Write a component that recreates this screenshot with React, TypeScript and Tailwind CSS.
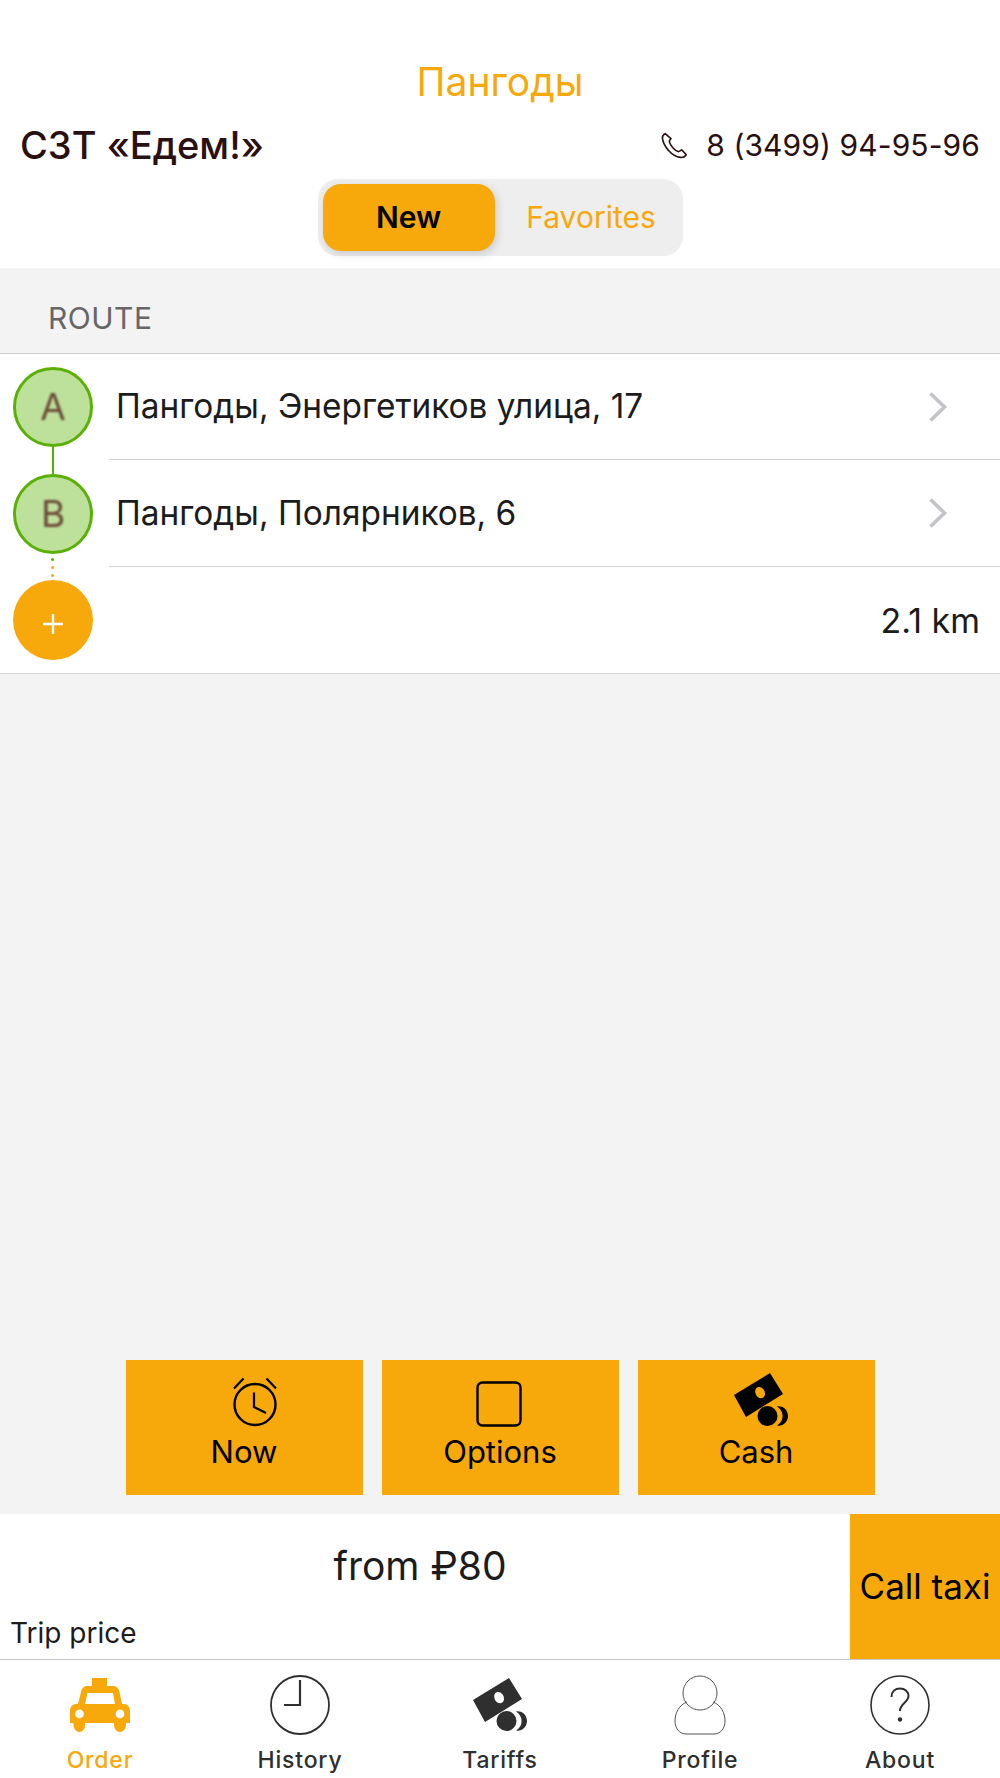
const ORANGE = "#f7a80a";

function Chevron() {
  return (
    <svg width="20" height="32" viewBox="0 0 20 32" fill="none" className="shrink-0">
      <path d="M2.5 2.5 L16.5 16 L2.5 29.5" stroke="#c4c4c8" strokeWidth="3.6" />
    </svg>
  );
}

function PhoneIcon() {
  return (
    <svg width="27" height="27" viewBox="0 0 27 27" fill="none" stroke="#2a1010" strokeWidth="1.6" strokeLinejoin="round">
      <path d="M4.2 1.6 C2.4 2.6 1.2 4 1.4 6.2 C2 10.5 4.4 15 7.6 18.6 C11 22.6 15.5 25 19.6 25.4 C22 25.6 24.4 24.2 25.2 22.6 L20.6 17.8 C19.6 18.8 18.4 19.6 17.2 19.6 C14.6 18.6 11.6 15.8 9.6 12.6 C8.4 10.6 8 9.2 8.8 8 C9.4 7.4 9.8 7 10 6.6 Z" />
    </svg>
  );
}

function Alarm() {
  return (
    <svg width="46" height="50" viewBox="0 0 46 50" fill="none" stroke="black" strokeWidth="2.4" className="block ml-[22px]">
      <circle cx="23" cy="27.5" r="20.5" />
      <path d="M2 11.5 L11.5 1.5 M44 11.5 L34.5 1.5" strokeWidth="2.2" />
      <path d="M22 15.5 V30 L34 36" strokeWidth="2.2" />
    </svg>
  );
}

function OptionsIcon() {
  return (
    <svg width="46" height="46" viewBox="0 0 46 46" fill="none" stroke="black" strokeWidth="2.4" className="block mr-[3px]">
      <rect x="1.5" y="1.5" width="43" height="43" rx="5" />
    </svg>
  );
}

function CashIcon({ color, className }: { color: string; className?: string }) {
  return (
    <svg width="56" height="54" viewBox="0 0 56 54" className={className}>
      <path
        fillRule="evenodd"
        fill={color}
        d="M37 0 L50 21 L13 44 L1 22 Z M25 14 C21.8 15 21.5 19 23.2 22.2 C25 25.2 28.5 26 30.6 24.2 C32.6 22.4 32.4 18.8 30.6 16.4 C29 14.4 27 13.6 25 14 Z"
      />
      <circle cx="34.5" cy="43" r="10" fill={color} />
      <path d="M44 33.4 C51 32.6 55 38 55 43 C55 48.4 50.6 53.4 44 52.6 C48 50 49.6 46.6 49.6 43 C49.6 39.4 48 36 44 33.4 Z" fill={color} />
    </svg>
  );
}

function Taxi() {
  return (
    <svg width="60" height="54" viewBox="0 0 60 54" className="block">
      <path
        fillRule="evenodd"
        fill={ORANGE}
        d="M22 0 H37 V8 H43 C47 8 48.5 10.5 49.5 14 L52 26 H54 C57.5 26 60 29 60 33 V45 H56 V47 C56 51 53 54 50 54 C47 54 44 51 44 47 V45 H15 V47 C15 51 12.5 54 9.5 54 C6.5 54 3.5 51 3.5 47 V45 H0 V33 C0 29 2.5 26 6 26 H8 L11 14 C12 10.5 13.5 8 17 8 H22 Z M17.5 15 L15 26 H45 L43 15 Z"
      />
      <circle cx="9.5" cy="36" r="4.4" fill="white" />
      <circle cx="50" cy="36" r="4.4" fill="white" />
    </svg>
  );
}

function HistoryIcon() {
  return (
    <svg width="60" height="60" viewBox="0 0 60 60" fill="none" stroke="#2f2f2f" className="block">
      <circle cx="30" cy="30" r="29" strokeWidth="1.8" />
      <path d="M30 5 V30 H14" strokeWidth="2.2" />
    </svg>
  );
}

function ProfileIcon() {
  return (
    <svg width="52" height="60" viewBox="0 0 52 60" fill="none" stroke="#555" strokeWidth="1" className="block">
      <circle cx="26" cy="18" r="17" />
      <path d="M13 27 C5 30 1 38 1 46 C1 54 6 59 12 59 H40 C46 59 51 54 51 46 C51 38 47 30 39 27" />
    </svg>
  );
}

function AboutIcon() {
  return (
    <svg width="60" height="60" viewBox="0 0 60 60" fill="none" stroke="#2f2f2f" className="block">
      <circle cx="30" cy="30" r="29" strokeWidth="1.6" />
      <path d="M21.5 22 C21.5 16.5 25 13.5 30 13.5 C35.2 13.5 38.5 16.8 38.5 21 C38.5 27.5 30 28 30 36" strokeWidth="2" />
      <circle cx="30" cy="44.5" r="2.2" fill="#2f2f2f" stroke="none" />
    </svg>
  );
}

function Point({ letter }: { letter: string }) {
  return (
    <div className="w-[80px] h-[80px] rounded-full bg-[#bde09b] border-[3px] border-[#5bb006] flex items-center justify-center">
      <span className="text-[37px] text-[#6a4a38] blur-[0.9px]">{letter}</span>
    </div>
  );
}

function ActionButton({ icon, label }: { icon: React.ReactNode; label: string }) {
  return (
    <div className="w-[237px] h-[135px] bg-[#f7a80a] flex flex-col items-center text-black text-[31px] leading-[34px]">
      <div className="h-[67px] flex items-end justify-center">{icon}</div>
      <div className="mt-[8px]">{label}</div>
    </div>
  );
}

function Tab({ icon, label, active }: { icon: React.ReactNode; label: string; active?: boolean }) {
  return (
    <div className={`flex flex-col items-center ${active ? "text-[#f7a80a]" : "text-[#2f2f2f]"}`}>
      <div className="h-[60px] flex items-center justify-center">{icon}</div>
      <div className="mt-[11px] text-[23px] leading-[28px] font-medium tracking-[0.8px]">{label}</div>
    </div>
  );
}

function RouteRow({ point, text, last, heightClass }: { point: React.ReactNode; text?: string; last?: boolean; heightClass: string }) {
  return (
    <div className={`flex items-center pl-[13px] ${heightClass}`}>
      <div className="w-[96px] shrink-0">{point}</div>
      <div className={`flex-1 h-full flex items-center pl-[7px] pr-[52px] ${last ? "" : "border-b border-[#cfcfcf]"}`}>
        {text ? (
          <>
            <span className="flex-1 text-[33.4px] text-[#1c1c1c]">{text}</span>
            <Chevron />
          </>
        ) : (
          <span className="ml-auto -mr-[32px] text-[34px] text-[#1c1c1c]">2.1 km</span>
        )}
      </div>
    </div>
  );
}

export default function App() {
  return (
    <div className="w-[1000px] h-[1778px] flex flex-col bg-white font-['Inter','Noto_Sans',sans-serif] overflow-hidden">
      <header className="h-[268px] shrink-0 flex flex-col">
        <div className="pt-[58px] text-center text-[39px] leading-[48px] text-[#f7a80a]">Пангоды</div>
        <div className="flex items-center justify-between pl-[20px] pr-[20px] mt-[21px] h-[36px] text-[#2a1010]">
          <span className="text-[38px] font-medium">СЗТ «Едем!»</span>
          <span className="flex items-center gap-[18px] text-[30px] tracking-[0.1px]">
            <PhoneIcon />8 (3499) 94-95-96
          </span>
        </div>
        <div className="self-center mt-[16px] w-[365px] h-[77px] bg-[#eeeeee] rounded-[20px] p-[5px] flex text-[30px]">
          <div className="w-[172px] h-[67px] bg-[#f7a80a] rounded-[18px] shadow-[2px_3px_8px_rgba(0,0,0,0.15)] flex items-center justify-center font-semibold text-black">
            New
          </div>
          <div className="flex-1 flex items-center justify-center pl-[10px] text-[#f7a80a]">Favorites</div>
        </div>
      </header>

      <main className="flex-1 bg-[#f3f3f3] flex flex-col">
        <div className="h-[86px] pl-[48px] pt-[32px] text-[30px] leading-[36px] text-[#666666] border-b border-[#cfcfcf] tracking-[0.5px]">
          ROUTE
        </div>
        <div className="relative bg-white border-b border-[#d4d4d4]">
          <RouteRow heightClass="h-[106px]" point={<Point letter="A" />} text="Пангоды, Энергетиков улица, 17" />
          <RouteRow heightClass="h-[107px]" point={<Point letter="B" />} text="Пангоды, Полярников, 6" />
          <RouteRow
            last
            heightClass="h-[106px]"
            point={
              <div className="w-[80px] h-[80px] rounded-full bg-[#f7a80a] flex items-center justify-center">
                <svg width="20" height="20" viewBox="0 0 20 20" stroke="white" strokeWidth="2.4" className="mt-[7px] blur-[0.4px]">
                  <path d="M10 0 V20 M0 10 H20" />
                </svg>
              </div>
            }
          />
          <div className="absolute left-[52px] top-[92px] w-[2px] h-[28px] bg-[#5bb006]" />
          <div className="absolute left-[51px] top-[204px] flex flex-col gap-[5px]">
            <div className="w-[3px] h-[3px] rounded-full bg-[#5bb006]" />
            <div className="w-[3px] h-[3px] rounded-full bg-[#f7a80a]" />
            <div className="w-[3px] h-[3px] rounded-full bg-[#f7a80a]" />
          </div>
        </div>
        <div className="flex-1" />
        <div className="flex justify-center gap-[19px] pb-[19px]">
          <ActionButton icon={<Alarm />} label="Now" />
          <ActionButton icon={<OptionsIcon />} label="Options" />
          <ActionButton icon={<CashIcon color="black" className="ml-[10px]" />} label="Cash" />
        </div>
      </main>

      <section className="h-[146px] shrink-0 bg-white border-b border-[#c8c8c8] flex">
        <div className="flex-1 flex flex-col text-[#1c1c1c]">
          <div className="pt-[26px] pr-[10px] text-center text-[39px] leading-[52px]">from ₽80</div>
          <div className="mt-auto pl-[10px] pb-[9px] text-[28px] leading-[34px]">Trip price</div>
        </div>
        <div className="w-[150px] bg-[#f7a80a] flex items-center justify-center text-[35px] text-black">Call taxi</div>
      </section>

      <nav className="h-[118px] shrink-0 grid grid-cols-5 pt-[15px] bg-white">
        <Tab active icon={<Taxi />} label="Order" />
        <Tab icon={<HistoryIcon />} label="History" />
        <Tab icon={<CashIcon color="#2f2f2f" />} label="Tariffs" />
        <Tab icon={<ProfileIcon />} label="Profile" />
        <Tab icon={<AboutIcon />} label="About" />
      </nav>
    </div>
  );
}
